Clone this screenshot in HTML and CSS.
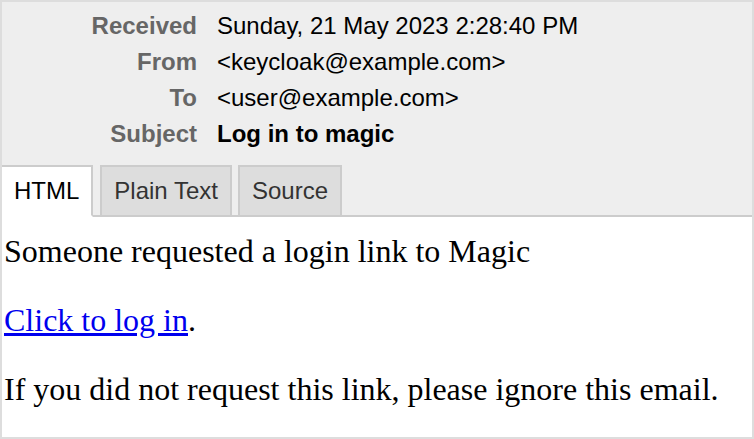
FILE: index.html
```html
<!DOCTYPE html>
<html lang="en">
<head>
<meta charset="utf-8">
<title>Log in to magic</title>
<link rel="stylesheet" href="styles.css">
</head>
<body>
<div class="mail">
  <div class="head">
    <dl class="meta">
      <dt>Received</dt><dd>Sunday, 21 May 2023 2:28:40 PM</dd>
      <dt>From</dt><dd>&lt;keycloak@example.com&gt;</dd>
      <dt>To</dt><dd>&lt;user@example.com&gt;</dd>
      <dt>Subject</dt><dd class="subject">Log in to magic</dd>
    </dl>
    <div class="tabs">
      <span class="tab active">HTML</span>
      <span class="tab">Plain Text</span>
      <span class="tab">Source</span>
    </div>
  </div>
  <div class="content">
    <p>Someone requested a login link to Magic</p>
    <p><a href="#">Click to log in</a>.</p>
    <p>If you did not request this link, please ignore this email.</p>
  </div>
</div>
</body>
</html>
```

FILE: styles.css
```css
html, body {
  margin: 0;
  padding: 0;
  height: 100%;
  background: #fff;
}
body {
  font-family: "Liberation Sans", Arial, sans-serif;
}
.mail {
  box-sizing: border-box;
  height: 439px;
  border: 2px solid #ddd;
  display: flex;
  flex-direction: column;
}
.head {
  background: #eee;
  padding-top: 6px;
  border-bottom: 2px solid #ccc;
}
.meta {
  display: grid;
  grid-template-columns: 195px 1fr;
  column-gap: 20px;
  margin: 0;
  font-size: 24px;
  line-height: 36px;
}
.meta dt {
  text-align: right;
  font-weight: bold;
  color: #666;
}
.meta dd {
  margin: 0;
  color: #000;
}
.meta .subject {
  font-weight: bold;
}
.tabs {
  display: flex;
  gap: 6px;
  margin-top: 13px;
  margin-bottom: -2px;
}
.tab {
  font-size: 24px;
  line-height: 48px;
  padding: 0 12px;
  border: 2px solid #ccc;
  background: #ddd;
  color: #333;
}
.tab.active {
  background: #fff;
  color: #000;
  border-left: 0;
  padding: 0 12px;
  margin-right: 1px;
  border-bottom-color: #fff;
}
.content {
  flex: 1;
  background: #fff;
  padding: 0 2px;
  overflow: hidden;
  font-family: "Liberation Serif", "Times New Roman", serif;
  font-size: 32px;
  color: #000;
}
.content p {
  margin: 32px 0;
}
.content p:first-child {
  margin-top: 16px;
}
.content a {
  color: #0000ee;
}
```
